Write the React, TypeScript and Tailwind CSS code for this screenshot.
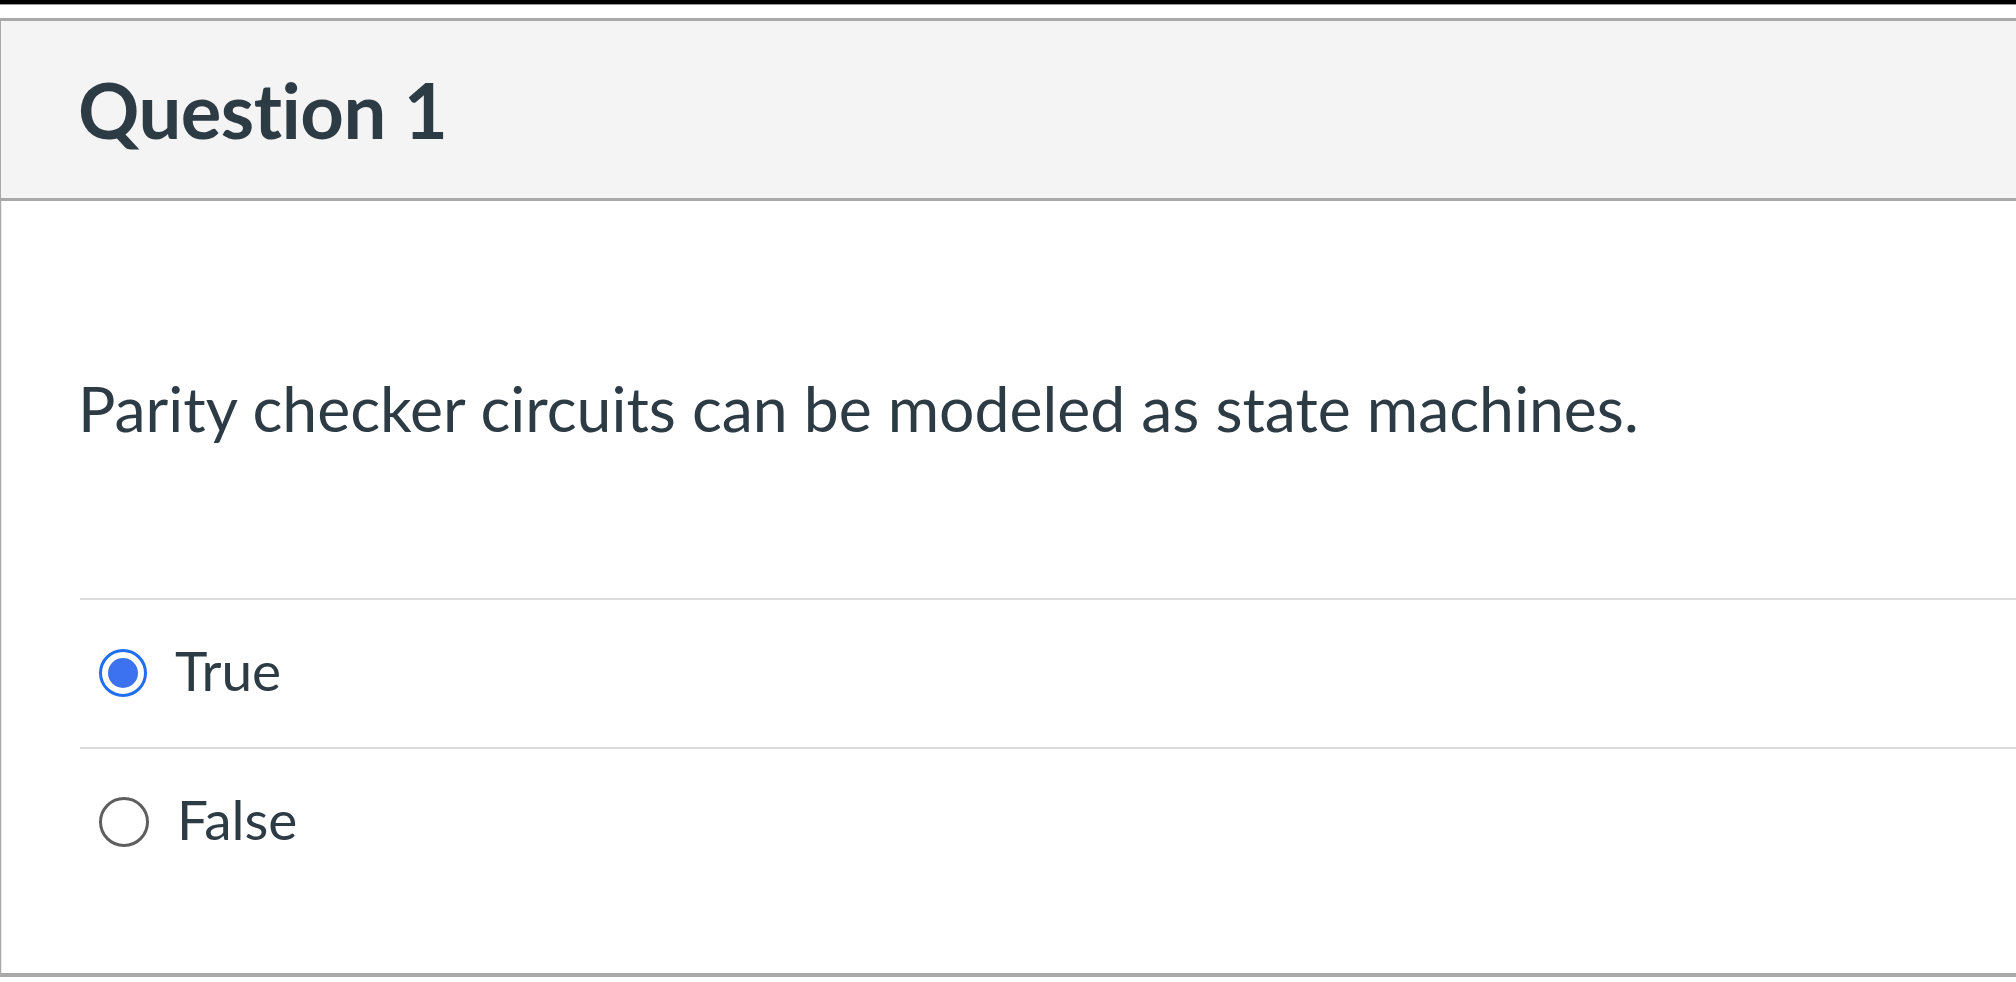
import { useState } from "react";

const options = ["True", "False"];

export default function App() {
  const [selected, setSelected] = useState("True");

  return (
    <div
      className="min-h-screen w-full overflow-hidden bg-white text-[#2d3b45]"
      style={{ fontFamily: "Lato, 'Noto Sans', sans-serif" }}
    >
      {/* top edge */}
      <div className="h-[4px] bg-black" />
      <div className="h-[1px] bg-[#9a9a9a]" />
      <div className="h-[13px]" />

      {/* Question card */}
      <div className="border-t-[3px] border-b-[4px] border-l border-[#a9a9a9]">
        <header className="flex h-[180px] items-center border-b-[3px] border-[#a9a9a9] bg-[#f4f4f4] pl-[77px]">
          <h2 className="text-[76px] font-bold leading-none tracking-[-0.5px]">Question 1</h2>
        </header>

        <div className="border-l border-[#ececec] pb-[77px] pl-[78px]">
          <p className="-ml-[2px] pt-[176px] text-[62.5px] leading-none">
            Parity checker circuits can be modeled as state machines.
          </p>

          <div className="mt-[158px]">
            {options.map((opt) => {
              const checked = selected === opt;
              return (
                <label
                  key={opt}
                  onClick={() => setSelected(opt)}
                  className="flex h-[149px] cursor-pointer items-center border-t-2 border-[#dcdcdc] pl-[19px]"
                >
                  {checked ? (
                    <span className="flex h-[48px] w-[48px] items-center justify-center rounded-full border-[3px] border-[#1f6ff2] bg-white">
                      <span className="h-[30px] w-[30px] rounded-full bg-[#3c72f0]" />
                    </span>
                  ) : (
                    <span className="h-[50px] w-[50px] rounded-full border-[3px] border-[#5e5e5e] bg-white" />
                  )}
                  <span className="-mt-[6px] ml-[28px] text-[55px] leading-none">{opt}</span>
                </label>
              );
            })}
          </div>
        </div>
      </div>
    </div>
  );
}
